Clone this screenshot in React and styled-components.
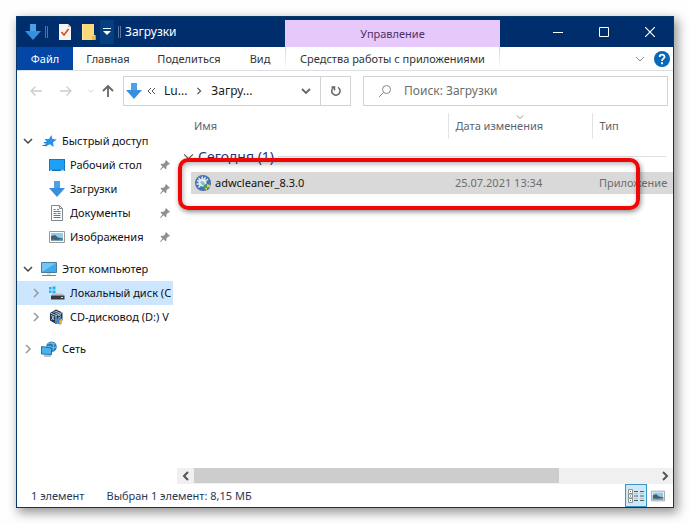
import React from "react";
import styled, { createGlobalStyle, css } from "styled-components";

const Global = createGlobalStyle`
  * { box-sizing: border-box; }
  body { margin: 0; background: #fefefe; }
  body, button, input {
    font-family: "Noto Sans", "Open Sans", sans-serif;
    font-size: 11px;
    line-height: 16px;
  }
  button { padding: 0; border: 0; background: none; color: inherit; }
  svg { display: block; flex: none; }
`;

const Desktop = styled.div`
  min-height: 100vh;
  display: flex;
  padding: 16px;
`;

const Window = styled.main`
  flex: 1;
  min-width: 0;
  display: flex;
  flex-direction: column;
  background: #fff;
  border: 1px solid #05386b;
  box-shadow: 3px 4px 10px 1px rgba(0, 0, 0, 0.4);
  color: #1b1b1b;
`;

const TitleBar = styled.header`
  display: grid;
  grid-template-columns: 268px 215px 1fr;
  height: 30px;
  background: #002d6b;
  color: #fff;
`;

const QuickTools = styled.div`
  display: flex;
  align-items: center;
  padding-left: 8px;
  gap: 4px;
`;

const Separator = styled.span`
  flex: none;
  width: 3px;
  height: 12px;
  border: solid #5574a3;
  border-width: 0 1px;
`;

const ToolButton = styled.button`
  display: grid;
  place-items: center;
  width: ${(p) => p.$w}px;
  height: 24px;
`;

const MoreButton = styled(ToolButton)`
  background: #053f7d;
`;

const Title = styled.h1`
  margin: 0;
  font-size: 12px;
  font-weight: 400;
  line-height: 16px;
`;

const ContextTitle = styled.div`
  align-self: end;
  height: 27px;
  padding-top: 6px;
  background: #e6c9fa;
  color: #4b3267;
  text-align: center;
`;

const WindowButtons = styled.div`
  display: flex;
  justify-content: flex-end;
`;

const WindowButton = styled.button`
  display: grid;
  place-items: center;
  width: 46px;
`;

const Tabs = styled.nav`
  display: grid;
  grid-template-columns: 56px 70px 92px 50px 215px 1fr;
  height: 24px;
  border-bottom: 1px solid #dcdfe3;
`;

const Tab = styled.button`
  color: #333;
  text-align: center;
  white-space: nowrap;
  ${(p) => p.$active && css`
    background: #0346a5;
    color: #fff;
  `}
  ${(p) => p.$context && css`
    border: solid;
    border-width: 0 1px;
    border-image: linear-gradient(#dccbe8, #fff) 1;
  `}
`;

const TabActions = styled.div`
  display: flex;
  align-items: center;
  justify-content: flex-end;
  gap: 9px;
  padding-right: 3px;
`;

const AddressRow = styled.div`
  display: flex;
  align-items: center;
  padding: 5px 5px 2px 11px;
`;

const NavButton = styled.button`
  display: grid;
  place-items: center;
  flex: none;
  width: ${(p) => p.$w}px;
  height: 30px;
`;

const AddressBox = styled.div`
  display: flex;
  align-items: center;
  flex: none;
  width: 228px;
  height: 30px;
  margin-right: 12px;
  padding-left: 2px;
  border: 1px solid #d2d2d2;
`;

const Crumb = styled.button`
  margin-left: ${(p) => p.$gap}px;
  font-size: 12px;
`;

const CrumbArrow = styled.span`
  margin-left: ${(p) => p.$gap}px;
`;

const AddressMenu = styled.button`
  display: grid;
  place-items: center;
  width: 28px;
  height: 28px;
  margin-left: auto;
`;

const Refresh = styled.button`
  display: grid;
  place-items: center;
  width: 30px;
  height: 28px;
  border-left: 1px solid #d2d2d2;
`;

const Search = styled.label`
  flex: 1;
  min-width: 0;
  display: flex;
  align-items: center;
  gap: 12px;
  height: 30px;
  padding-left: 14px;
  border: 1px solid #d2d2d2;
`;

const SearchInput = styled.input`
  flex: 1;
  min-width: 0;
  border: 0;
  padding: 0;
  outline: 0;
  background: transparent;
  font-size: 12px;
  &::placeholder { color: #6d6d6d; opacity: 1; }
`;

const Body = styled.div`
  flex: 1;
  display: grid;
  grid-template-columns: 156px minmax(0, 1fr);
`;

const Sidebar = styled.nav`
  padding-top: 21px;
  overflow: hidden;
`;

const Group = styled.div`
  margin-bottom: 8px;
`;

const TreeRow = styled.button`
  display: flex;
  align-items: center;
  width: 100%;
  height: 24px;
  padding-left: ${(p) => (p.$child ? 12 : 4)}px;
  color: #111;
  text-align: left;
  background: ${(p) => (p.$selected ? "#cce6ff" : "transparent")};
`;

const Twist = styled.span`
  display: grid;
  place-items: center;
  flex: none;
  width: 14px;
  margin-right: 6px;
`;

const TreeLabel = styled.span`
  flex: 1;
  min-width: 0;
  margin-left: 5px;
  overflow: hidden;
  white-space: nowrap;
`;

const Pin = styled.span`
  flex: none;
  margin-right: 3px;
`;

const Content = styled.section`
  position: relative;
  min-width: 0;
  display: flex;
  flex-direction: column;
`;

const FileTable = styled.table`
  flex: none;
  width: calc(100% - 18px);
  margin: 5px 0 auto 18px;
  table-layout: fixed;
  border-collapse: collapse;
`;

const NameCol = styled.col`
  width: 257px;
`;
const DateCol = styled.col`
  width: 144px;
`;

const HeadCell = styled.th`
  position: relative;
  height: 26px;
  padding: 0 0 0 ${(p) => (p.$first ? 3 : 7)}px;
  color: #5b6472;
  font-weight: 400;
  text-align: left;
  border-right: ${(p) => (p.$last ? "0" : "1px solid #e3e3e3")};
`;

const SortMark = styled.span`
  position: absolute;
  top: 0;
  left: 50%;
  transform: translateX(-50%);
`;

const GroupCell = styled.th`
  height: 33px;
  padding: 0;
  font-weight: 400;
`;

const GroupHead = styled.div`
  display: flex;
  align-items: center;
  gap: 4px;
  margin-left: -8px;
  padding: 2px 7px 0 0;
  color: #27367d;
  font-size: 14px;
  line-height: 16px;
  &::after {
    content: "";
    flex: 1;
    height: 1px;
    background: #e1e1e1;
  }
`;

const FileRow = styled.tr`
  background: #d9d9d9;
`;

const Cell = styled.td`
  height: 22px;
  padding: 0 0 0 ${(p) => (p.$name ? 4 : 7)}px;
  color: ${(p) => (p.$name ? "#111" : "#6d6d6d")};
  white-space: nowrap;
`;

const FileName = styled.span`
  display: flex;
  align-items: center;
  gap: 4px;
`;

const Highlight = styled.div`
  position: absolute;
  top: 50px;
  left: 5px;
  right: 33px;
  height: 52px;
  border: 4px solid #ef0707;
  border-radius: 10px;
  box-shadow: 1px 2px 5px rgba(0, 0, 0, 0.45), inset 1px 2px 5px rgba(0, 0, 0, 0.3);
  pointer-events: none;
`;

const ScrollBar = styled.div`
  display: flex;
  height: 16px;
  margin-left: 4px;
  background: #f0f0f0;
`;

const ScrollArrow = styled.button`
  display: grid;
  place-items: center;
  width: 17px;
`;

const Track = styled.div`
  flex: 1;
`;

const Thumb = styled.div`
  width: 79%;
  height: 15px;
  background: #cdcdcd;
`;

const StatusBar = styled.footer`
  display: flex;
  align-items: center;
  gap: 22px;
  height: 23px;
  padding: 0 4px 0 14px;
  color: #2d3852;
`;

const Views = styled.div`
  display: flex;
  margin-left: auto;
`;

const ViewButton = styled.button`
  display: grid;
  place-items: center;
  width: 22px;
  height: 23px;
  border: 1px solid ${(p) => (p.$on ? "#3b97c9" : "transparent")};
  background: ${(p) => (p.$on ? "#cfe8f5" : "transparent")};
`;

const paths = {
  down: "M1 3l4 4 4-4",
  right: "M3 1l4 4-4 4",
  left: "M7 1L3 5l4 4",
};

const Chevron = ({ dir = "down", size = 10, color = "#555", weight = 1.5 }) => (
  <svg width={size} height={size} viewBox="0 0 10 10" fill="none" stroke={color} strokeWidth={weight}>
    <path d={paths[dir]} />
  </svg>
);

const DownArrow = () => (
  <svg width="16" height="16" viewBox="0 0 16 16">
    <path d="M5 0h6v7h5l-8 9-8-9h5z" fill="#3a8fdc" />
    <path d="M5 0h6v7H5z" fill="#4ba2e6" />
  </svg>
);

const Arrow = ({ d, color, weight = 1.3 }) => (
  <svg width="14" height="14" viewBox="0 0 14 14" fill="none" stroke={color} strokeWidth={weight}>
    <path d={d} />
  </svg>
);

const PageCheck = () => (
  <svg width="12" height="16" viewBox="0 0 12 16">
    <path d="M0 0h9l3 3v13H0z" fill="#f7f3f0" />
    <path d="M9 0v3h3" fill="#cbbfb9" />
    <path d="M2.500 8l2.500 3 4.500-6" fill="none" stroke="#d64b2a" strokeWidth="1.600" />
  </svg>
);

const Folder = () => (
  <svg width="14" height="16" viewBox="0 0 14 16">
    <path d="M0 0h12v11h1.500v5H0z" fill="#f9d978" />
    <path d="M10 16v-4h3.500v4z" fill="#e9b94d" />
    <path d="M0 0h1v16H0z" fill="#ffebaa" />
  </svg>
);

const Star = () => (
  <svg width="16" height="16" viewBox="0 0 16 16">
    <path d="M10.500 2l.9 4.100 4.400.3-3.700 2.800.5 4.800-3.800-2.700-4.600 2.500 1.700-4.800-2.300-3h4.300z" fill="#2593e8" />
    <path d="M3 9.500h3M1.500 12.500h4M3.500 11h3" stroke="#2578bd" />
  </svg>
);

const Desk = () => (
  <svg width="16" height="16" viewBox="0 0 16 16">
    <path d="M0 2h16v12H0z" fill="#1677be" />
    <path d="M1 3h14v9.500H1z" fill="#20a0f4" />
    <path d="M1 13.300h2M12 13.300h3" stroke="#d9efff" />
  </svg>
);

const Doc = () => (
  <svg width="16" height="16" viewBox="0 0 16 16">
    <path d="M2.500.5h8l3 3v12h-11z" fill="#fff" stroke="#7c8894" />
    <path d="M10.500.5v3h3" fill="none" stroke="#7c8894" />
    <path d="M4.500 4.500h2m1.500 0h2M4.500 6.500h7M4.500 8.500h3m1 0h3M4.500 10.500h7M4.500 12.500h7" stroke="#477fb0" />
  </svg>
);

const Picture = ({ size = 16 }) => (
  <svg width={size} height={size} viewBox="0 0 16 16">
    <path d="M.5 2.500h15v11H.5z" fill="#fff" stroke="#9a9a9a" />
    <path d="M2 4h12v8H2z" fill="#91c9e8" />
    <path d="M2 7l4-1 3 2.500 5 1V12H2z" fill="#3e6275" />
    <path d="M2 10.500l5 .5 7-.7V12H2z" fill="#78a4b5" />
  </svg>
);

const Computer = () => (
  <svg width="16" height="16" viewBox="0 0 16 16">
    <path d="M.5 1.500h15v10H.5z" fill="#3fabeb" stroke="#477d9d" />
    <path d="M1 2h14L1 11z" fill="#72c8f5" />
    <path d="M6 13h4" stroke="#b3bec5" />
    <path d="M1 14.500h14" stroke="#74818a" />
  </svg>
);

const Disk = () => (
  <svg width="16" height="16" viewBox="0 0 16 16">
    <path d="M0 2h2.500v2.500H0zM3.500 1.500h3v3h-3zM0 5.500h2.500V8H0zM3.500 5.500h3v3h-3z" fill="#25b0ee" />
    <path d="M4 8.500h9.500l1.500 2H2.500z" fill="#b7bdc1" />
    <path d="M2 10.500h13.500v4H2z" fill="#353a3e" />
    <path d="M12 12.500h2" stroke="#c8ebdc" />
  </svg>
);

const Cube = () => (
  <svg width="16" height="16" viewBox="0 0 16 16">
    <path d="M7 .5l6.500 3v8L7 15 1 11.500V4z" fill="#24344d" />
    <path d="M1.500 4L7 6.500l6-3M7 6.500V14M2.500 6l2.500 5M5 7l-2.500 4M9 7l3-1.500M9 9.500l3-2M4.500 3.300l4-1M6.500 4.500l4-1" fill="none" stroke="#bfcde0" />
    <path d="M7.500 10l3-1.500 2 1v5.500l-2 .5-3-1.500z" fill="#3c8bd6" />
    <path d="M10.500 11.500l2.500-2v5l-2.500 1z" fill="#eeb42d" />
  </svg>
);

const Network = () => (
  <svg width="16" height="16" viewBox="0 0 16 16">
    <circle cx="10.500" cy="5.700" r="5.300" fill="#2b7db9" />
    <path d="M7 3c2-2 4 0 7 0M6 6c3-2 5 2 9 0M10 .5c3 2 3 6 2 9" fill="none" stroke="#83c3e8" />
    <path d="M.5 5.500l10 1.500v6.500l-10-.5z" fill="#46b4ee" stroke="#286f9f" />
    <path d="M3 15h7" stroke="#718795" />
  </svg>
);

const PinIcon = () => (
  <svg width="10" height="10" viewBox="0 0 10 10">
    <path d="M6 0l4 4-1 .7-.8-.1-1.800 1.900.1 2-1 .8-2-2L.5 10 0 9.500l2.500-3-2-2 1-.8 2 .1L5.400 2l-.1-1z" fill="#8d9194" />
  </svg>
);

const AppIcon = () => (
  <svg width="16" height="16" viewBox="0 0 16 16">
    <circle cx="8" cy="8" r="8" fill="#4673ab" />
    <circle cx="7.500" cy="7.500" r="4" fill="#dceaf2" />
    <path d="M7 1.500l1 4M2 5.500l5 2M3.500 12.500l3-4M8 8l5-4M3.500 3l3 4M1.500 9h5M10.500 2L8.500 6" stroke="#dceaf2" strokeWidth="1.400" />
    <path d="M5 7l3-1 2 3-2 2z" fill="#8db6d2" />
    <path d="M9 10l3-1 3 1v3l-3 2.500L9 13z" fill="#267bc1" />
    <path d="M12 9l3 1v2.500h-3zM9 12.500h3v3z" fill="#f0c62f" />
    <path d="M9 10l3-1v3.500H9z" fill="#499955" />
  </svg>
);

const Help = () => (
  <svg width="16" height="16" viewBox="0 0 16 16">
    <circle cx="8" cy="8" r="8" fill="#0568b8" />
    <path d="M5.700 6c0-3 4.800-3 4.800-.2C10.500 7.700 8 7.600 8 10" fill="none" stroke="#fff" strokeWidth="1.800" />
    <path d="M7 11.200h2v2H7z" fill="#fff" />
  </svg>
);

const Details = () => (
  <svg width="16" height="14" viewBox="0 0 16 14">
    <path d="M.5.5h4v4h-4zm0 4.500h4v4h-4zm0 4.500h4v4h-4z" fill="#fff" stroke="#8a9297" />
    <path d="M2 2.500h1M2 7h1M2 11.500h1M6 2.500h4m2 0h4M6 7h4m2 0h4M6 11.500h4m2 0h4" stroke="#4f5c64" />
    <path d="M6 4.500h4m2 0h4M6 9.500h4m2 0h4" stroke="#b2c3cc" />
  </svg>
);

const groups = [
  {
    label: "Быстрый доступ", icon: Star, open: true,
    items: [
      { label: "Рабочий стол", icon: Desk, pinned: true },
      { label: "Загрузки", icon: DownArrow, pinned: true },
      { label: "Документы", icon: Doc, pinned: true },
      { label: "Изображения", icon: Picture, pinned: true },
    ],
  },
  {
    label: "Этот компьютер", icon: Computer, open: true,
    items: [
      { label: "Локальный диск (C", icon: Disk, branch: true, selected: true },
      { label: "CD-дисковод (D:) V", icon: Cube, branch: true },
    ],
  },
  { label: "Сеть", icon: Network, items: [] },
];

function TreeItem({ item, child }) {
  const Icon = item.icon;
  return (
    <TreeRow $child={child} $selected={item.selected}>
      <Twist>
        {(!child || item.branch) && (
          <Chevron dir={item.open ? "down" : "right"} color={item.open ? "#444" : "#999"} />
        )}
      </Twist>
      <Icon />
      <TreeLabel>{item.label}</TreeLabel>
      {item.pinned && <Pin><PinIcon /></Pin>}
    </TreeRow>
  );
}

export default function App() {
  return (
    <Desktop>
      <Global />
      <Window>
        <TitleBar>
          <QuickTools>
            <DownArrow />
            <Separator />
            <ToolButton $w={26} aria-label="Свойства"><PageCheck /></ToolButton>
            <ToolButton $w={14} aria-label="Новая папка"><Folder /></ToolButton>
            <MoreButton $w={14} aria-label="Настройка панели">
              <svg width="8" height="8" viewBox="0 0 8 8"><path d="M0 0h8v1H0zM0 3h8L4 7z" fill="#fff" /></svg>
            </MoreButton>
            <Separator />
            <Title>Загрузки</Title>
          </QuickTools>
          <ContextTitle>Управление</ContextTitle>
          <WindowButtons>
            <WindowButton aria-label="Свернуть">
              <svg width="10" height="10"><path d="M0 5.500h10" stroke="#fff" /></svg>
            </WindowButton>
            <WindowButton aria-label="Развернуть">
              <svg width="10" height="10"><path d="M.5.5h9v9h-9z" fill="none" stroke="#fff" /></svg>
            </WindowButton>
            <WindowButton aria-label="Закрыть">
              <svg width="10" height="10"><path d="M0 0l10 10M10 0L0 10" stroke="#fff" strokeWidth="1.200" /></svg>
            </WindowButton>
          </WindowButtons>
        </TitleBar>
        <Tabs>
          <Tab $active>Файл</Tab>
          <Tab>Главная</Tab>
          <Tab>Поделиться</Tab>
          <Tab>Вид</Tab>
          <Tab $context>Средства работы с приложениями</Tab>
          <TabActions>
            <Chevron color="#8a8a8a" weight={1} />
            <button aria-label="Справка"><Help /></button>
          </TabActions>
        </Tabs>
        <AddressRow>
          <NavButton $w={16} aria-label="Назад"><Arrow d="M13 7H2M6.500 2.500L2 7l4.500 4.500" color="#ccc" /></NavButton>
          <NavButton $w={44} aria-label="Вперёд"><Arrow d="M1 7h11M7.500 2.500L12 7l-4.500 4.500" color="#ccc" /></NavButton>
          <NavButton $w={4} aria-label="Последние"><Chevron size={6} color="#ccc" /></NavButton>
          <NavButton $w={31} aria-label="Вверх"><Arrow d="M7 13V2M2 7l5-5 5 5" color="#666" weight={1.8} /></NavButton>
          <AddressBox>
            <DownArrow />
            <CrumbArrow $gap={5}>
              <svg width="9" height="8" viewBox="0 0 9 8" fill="none" stroke="#555"><path d="M4 1L1 4l3 3M8 1L5 4l3 3" /></svg>
            </CrumbArrow>
            <Crumb $gap={8}>Lu...</Crumb>
            <CrumbArrow $gap={8}><Chevron dir="right" size={8} /></CrumbArrow>
            <Crumb $gap={8}>Загру...</Crumb>
            <AddressMenu aria-label="Журнал адресов"><Chevron color="#666" weight={1.8} /></AddressMenu>
            <Refresh aria-label="Обновить">
              <svg width="12" height="12" viewBox="0 0 12 12" fill="none" stroke="#666" strokeWidth="1.500">
                <path d="M8 2.300a4.200 4.200 0 1 1-4.500.2M1.500 2h3v3.500" />
              </svg>
            </Refresh>
          </AddressBox>
          <Search>
            <svg width="14" height="14" viewBox="0 0 14 14" fill="none" stroke="#888">
              <circle cx="8.500" cy="5.500" r="4" /><path d="M5.700 8.300L1 13" />
            </svg>
            <SearchInput aria-label="Поиск" placeholder="Поиск: Загрузки" />
          </Search>
        </AddressRow>
        <Body>
          <Sidebar>
            {groups.map((g) => (
              <Group key={g.label}>
                <TreeItem item={g} />
                {g.items.map((i) => <TreeItem key={i.label} item={i} child />)}
              </Group>
            ))}
          </Sidebar>
          <Content>
            <FileTable>
              <colgroup><NameCol /><DateCol /><col /></colgroup>
              <thead>
                <tr>
                  <HeadCell $first>Имя</HeadCell>
                  <HeadCell>Дата изменения<SortMark><Chevron size={8} color="#777" weight={1} /></SortMark></HeadCell>
                  <HeadCell $last>Тип</HeadCell>
                </tr>
              </thead>
              <tbody>
                <tr>
                  <GroupCell colSpan={3}>
                    <GroupHead><Chevron size={11} weight={1} />Сегодня (1)</GroupHead>
                  </GroupCell>
                </tr>
                <FileRow>
                  <Cell $name><FileName><AppIcon />adwcleaner_8.3.0</FileName></Cell>
                  <Cell>25.07.2021 13:34</Cell>
                  <Cell>Приложение</Cell>
                </FileRow>
              </tbody>
            </FileTable>
            <Highlight />
            <ScrollBar>
              <ScrollArrow aria-label="Влево"><Chevron dir="left" weight={2} /></ScrollArrow>
              <Track><Thumb /></Track>
              <ScrollArrow aria-label="Вправо"><Chevron dir="right" weight={2} /></ScrollArrow>
            </ScrollBar>
          </Content>
        </Body>
        <StatusBar>
          <span>1 элемент</span>
          <span>Выбран 1 элемент: 8,15 МБ</span>
          <Views>
            <ViewButton $on aria-label="Таблица"><Details /></ViewButton>
            <ViewButton aria-label="Крупные значки"><Picture size={14} /></ViewButton>
          </Views>
        </StatusBar>
      </Window>
    </Desktop>
  );
}
